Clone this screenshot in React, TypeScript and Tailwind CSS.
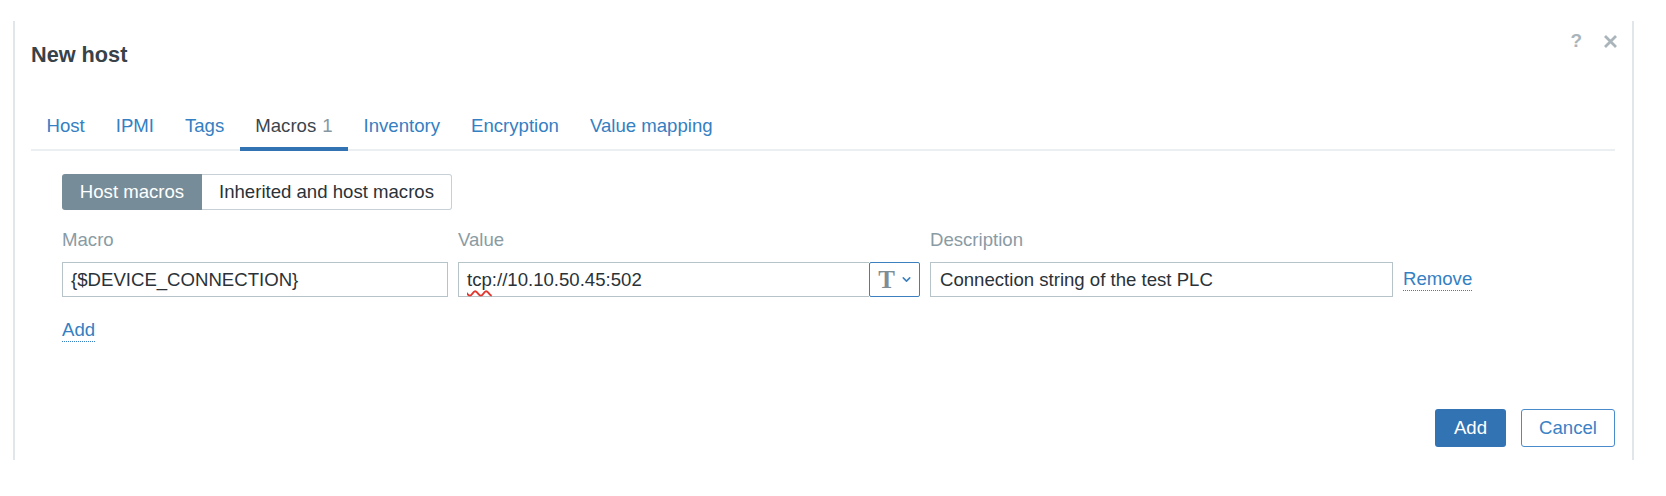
import { ChevronDown } from "lucide-react";

const tabs = [
  { label: "Host" },
  { label: "IPMI" },
  { label: "Tags" },
  { label: "Macros", count: 1, active: true },
  { label: "Inventory" },
  { label: "Encryption" },
  { label: "Value mapping" },
];

function CloseIcon() {
  return (
    <svg width="15" height="15" viewBox="0 0 15 15" aria-hidden="true">
      <path
        d="M2 2 L13 13 M13 2 L2 13"
        stroke="#aab5bb"
        strokeWidth="2.8"
        strokeLinecap="butt"
      />
    </svg>
  );
}

export default function App() {
  return (
    <div
      className="h-[496px] w-full bg-white pl-[13px] pt-[21px] text-[18.6px] text-[#2a3238]"
      style={{ fontFamily: '"Liberation Sans", Arial, sans-serif' }}
    >
      <div className="relative flex h-[439px] w-[1621px] flex-col border-x-2 border-[#e0e6e9] pl-[16px] pr-[17px]">
        {/* header actions */}
        <div className="absolute right-[14px] top-[9px] flex h-[22px] items-center gap-[21px]">
          <span className="text-[19px] font-semibold leading-[22px] text-[#aab5bb]">
            ?
          </span>
          <CloseIcon />
        </div>

        <h1 className="mt-[22px] text-[21.7px] font-bold leading-[24px] text-[#374249]">
          New host
        </h1>

        {/* tabs */}
        <div className="mt-[47px] flex border-b-2 border-[#eceff1]">
          {tabs.map((tab) => (
            <div
              key={tab.label}
              className={
                tab.active
                  ? "-mb-[2px] border-b-4 border-[#3273b3] px-[15.5px] pb-[9px] leading-[24px] text-[#3b454c]"
                  : "-mb-[2px] border-b-4 border-transparent px-[15.5px] pb-[9px] leading-[24px] text-[#3480c2]"
              }
            >
              {tab.label}
              {tab.count !== undefined && (
                <span className="ml-[6px] text-[#8797a0]">{tab.count}</span>
              )}
            </div>
          ))}
        </div>

        {/* tab content */}
        <div className="pl-[31px]">
          <div className="mt-[23px] flex h-[36px] w-[390px]">
            <div className="flex w-[140px] items-center justify-center rounded-l-[3px] bg-[#768d99] text-white">
              Host macros
            </div>
            <div className="flex w-[250px] items-center justify-center rounded-r-[3px] border border-l-0 border-[#c6d0d5] text-[#2a3238]">
              Inherited and host macros
            </div>
          </div>

          <div className="mt-[18px] grid grid-cols-[386px_462px_463px_auto] gap-x-[10px]">
            <div className="leading-[24px] text-[#8a9ba4]">Macro</div>
            <div className="leading-[24px] text-[#8a9ba4]">Value</div>
            <div className="leading-[24px] text-[#8a9ba4]">Description</div>
            <div />

            <div className="mt-[10px] flex h-[35px] items-center border border-[#b6c3c9] pl-[8px]">
              {"{$DEVICE_CONNECTION}"}
            </div>
            <div className="mt-[10px] flex h-[35px]">
              <div className="flex flex-1 items-center border border-r-0 border-[#b6c3c9] pl-[8px]">
                <span className="underline decoration-[#e2372f] decoration-wavy decoration-[1.5px] underline-offset-[4px]">
                  tcp
                </span>
                ://10.10.50.45:502
              </div>
              <div className="flex w-[51px] items-center justify-center gap-[5px] rounded-[2px] border border-[#3d80bf] pl-[2px]">
                <span
                  className="text-[25px] font-bold leading-none text-[#7f8d95]"
                  style={{ fontFamily: '"Liberation Serif", "Times New Roman", serif' }}
                >
                  T
                </span>
                <ChevronDown size={13} strokeWidth={2.8} color="#3d80bf" />
              </div>
            </div>
            <div className="mt-[10px] flex h-[35px] items-center border border-[#b6c3c9] pl-[9px]">
              Connection string of the test PLC
            </div>
            <div className="mt-[10px] flex h-[35px] items-center">
              <span className="border-b border-dotted border-[#3480c2] leading-[22px] text-[#3480c2]">
                Remove
              </span>
            </div>
          </div>

          <div className="mt-[19px]">
            <span className="inline-block border-b border-dotted border-[#3480c2] leading-[22px] text-[#3480c2]">
              Add
            </span>
          </div>
        </div>

        {/* footer */}
        <div className="mt-auto flex justify-end gap-[15px] pb-[13px]">
          <button className="h-[38px] w-[71px] rounded-[3px] bg-[#3273b3] text-white">
            Add
          </button>
          <button className="h-[38px] w-[94px] rounded-[3px] border border-[#4a8bcb] bg-white text-[#3a82c4]">
            Cancel
          </button>
        </div>
      </div>
    </div>
  );
}
